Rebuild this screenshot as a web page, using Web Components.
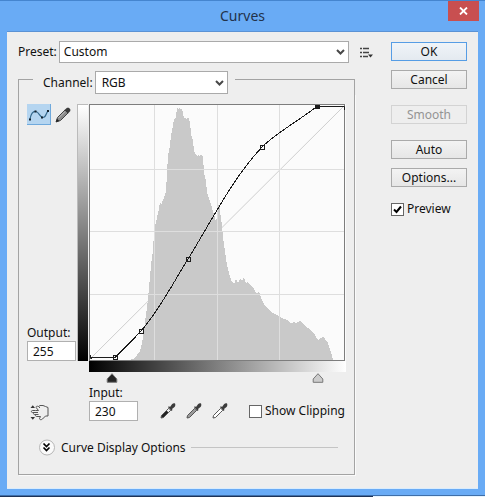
<!DOCTYPE html>
<html lang="en">
<head>
<meta charset="utf-8">
<meta name="viewport" content="width=device-width, initial-scale=1">
<title>Curves</title>
<style>
  body {
    margin: 0;
    min-height: 100vh;
    background: linear-gradient(to right, #1d3358 0 77%, #e6f4ff 77%);
    font: 12px/16px "Noto Sans", "Open Sans", sans-serif;
    color: #111;
  }
</style>
</head>
<body>

<!-- Window frame -->
<template id="window-template">
  <style>
    :host {
      display: block;
      box-sizing: border-box;
      background: #69abf5;
      border-top: 1px solid #4585cf;
      border-bottom: 1px solid #3f6ea8;
      padding: 0 7px 6px;
    }
    header {
      display: grid;
      grid-template-columns: 32px 1fr 32px;
      height: 30px;
    }
    h1 {
      margin: 0;
      font-size: 14px;
      font-weight: 400;
      line-height: 30px;
      text-align: center;
      color: #22324a;
    }
    button {
      width: 31px;
      height: 20px;
      padding: 0;
      border: 0;
      background: #c84f50;
      display: grid;
      place-items: center;
    }
    header button { margin-left: 2px; }
    main {
      background: #eee;
      border-top: 1px solid #5b92d4;
      border-bottom: 1px solid #d9ecfd;
      padding: 9px 11px 13px;
    }
  </style>
  <header>
    <span></span>
    <h1></h1>
    <button type="button" aria-label="Close">
      <svg width="9" height="8" viewBox="0 0 9 8"><path d="M1 .5 8 7.5M8 .5 1 7.5" stroke="#fff" stroke-width="1.8"/></svg>
    </button>
  </header>
  <main><slot></slot></main>
</template>

<!-- Two columns: settings and actions -->
<template id="dialog-template">
  <style>
    :host {
      display: grid;
      grid-template-columns: minmax(0, 1fr) 76px;
      gap: 18px;
    }
    .actions { display: grid; gap: 9px; align-content: start; padding-top: 1px; }
    .actions ::slotted(.space) { margin-top: 7px; }
    .actions ::slotted(.check) { margin-top: 5px; }
  </style>
  <div><slot></slot></div>
  <div class="actions"><slot name="actions"></slot></div>
</template>

<template id="select-template">
  <style>
    :host { display: flex; align-items: center; gap: 2px; }
    .box { display: grid; flex: 1; }
    select, svg { grid-area: 1 / 1; }
    select {
      appearance: none;
      width: 100%;
      height: 22px;
      padding: 0 20px 0 4px;
      border: 1px solid #aaa;
      border-radius: 0;
      background: #fff;
      font: inherit;
      color: inherit;
    }
    svg { place-self: center end; margin-right: 4px; pointer-events: none; }
    :host([large]) select { height: 23px; padding-left: 6px; }
  </style>
  <label for="list"></label>
  <span class="box">
    <select id="list"></select>
    <svg width="9" height="6" viewBox="0 0 9 6"><path d="M1 1 4.500 4.500 8 1" fill="none" stroke="#484848" stroke-width="2"/></svg>
  </span>
</template>

<template id="button-template">
  <style>
    :host { display: block; }
    button {
      display: block;
      width: 100%;
      height: 19px;
      padding: 0;
      border: 1px solid #aaa;
      background: linear-gradient(#f3f3f3, #e6e6e6);
      font: inherit;
      line-height: 16px;
      color: inherit;
    }
    :host([primary]) button { border-color: #569de5; background: linear-gradient(#f0f4f8, #e4eaf0); }
    button:disabled { border-color: #d3d3d3; background: #eee; color: #949494; }
  </style>
  <button type="button"><slot></slot></button>
</template>

<template id="checkbox-template">
  <style>
    :host { display: block; }
    label { display: flex; align-items: center; gap: 3px; white-space: nowrap; }
    .box { display: grid; }
    input, svg { grid-area: 1 / 1; }
    input {
      appearance: none;
      width: 13px;
      height: 13px;
      margin: 0;
      border: 1px solid #666;
      background: #fff;
    }
    svg { visibility: hidden; pointer-events: none; }
    input:checked + svg { visibility: visible; }
  </style>
  <label>
    <span class="box">
      <input type="checkbox">
      <svg width="13" height="13" viewBox="0 0 13 13"><path d="M3 6.500 5.500 9 10 3.500" fill="none" stroke="#000" stroke-width="2"/></svg>
    </span>
    <span><slot></slot></span>
  </label>
</template>

<template id="field-template">
  <style>
    :host { display: grid; width: 49px; }
    label { line-height: 16px; }
    input {
      box-sizing: border-box;
      width: 100%;
      height: 20px;
      padding: 0 5px;
      border: 1px solid #b0b0b0;
      background: #fff;
      font: inherit;
      color: inherit;
    }
  </style>
  <label for="value"></label>
  <input id="value" type="text" inputmode="numeric">
</template>

<template id="tool-template">
  <style>
    :host { display: block; }
    button {
      display: grid;
      place-items: center;
      padding: 0;
      border: 0;
      background: none;
    }
    :host([active]) button {
      width: 24px;
      height: 21px;
      background: #b5d5f0;
      border: solid #6fa9dc;
      border-width: 0 1px 1px 0;
    }
  </style>
  <button type="button"><slot></slot></button>
</template>

<!-- Frame whose top line is broken by the header control -->
<template id="group-template">
  <style>
    :host { display: block; }
    .top { display: flex; }
    .start, .end { margin-top: 8px; border-top: 1px solid #a3a3a3; }
    .start { width: 15px; margin-right: 10px; }
    .start::before { content: ""; display: block; height: 100%; border-left: 1px solid #a3a3a3; }
    .end { flex: 1; margin-left: 7px; border-right: 1px solid #a3a3a3; }
    .body {
      border: solid #a3a3a3;
      border-width: 0 1px 1px;
      padding: 10px 8px 18px;
      box-shadow: 1px 1px #fafafa;
    }
  </style>
  <div class="top">
    <span class="start"></span>
    <slot name="header"></slot>
    <span class="end"></span>
  </div>
  <div class="body"><slot></slot></div>
</template>

<template id="graph-template">
  <style>
    :host {
      display: grid;
      grid-template-columns: 50px 12px minmax(0, 1fr);
    }
    .side { display: flex; flex-direction: column; justify-content: space-between; }
    .output-ramp {
      box-sizing: border-box;
      background: linear-gradient(#fff, #000);
      border: solid #bbb;
      border-width: 1px 0 0 1px;
      margin-right: 1px;
    }
    svg { display: block; width: 100%; height: auto; }
    .input { grid-column: 3; }
    .input-ramp { height: 11px; background: linear-gradient(to right, #000, #fff); }
    .sliders { display: grid; margin: 0 -6px; padding-top: 1px; }
    input {
      grid-area: 1 / 1;
      appearance: none;
      width: 100%;
      height: 10px;
      margin: 0;
      background: none;
      pointer-events: none;
    }
    input::-webkit-slider-thumb {
      appearance: none;
      width: 12px;
      height: 10px;
      pointer-events: auto;
      background: url("data:image/svg+xml,%3Csvg xmlns='http://www.w3.org/2000/svg' width='12' height='10'%3E%3Cpath d='M6 .7 10.800 6v3.300H1.200V6z' fill='%23252525' stroke='%23777'/%3E%3C/svg%3E");
    }
    .white::-webkit-slider-thumb {
      background: url("data:image/svg+xml,%3Csvg xmlns='http://www.w3.org/2000/svg' width='12' height='10'%3E%3Cpath d='M6 .7 10.800 6v3.300H1.200V6z' fill='%23ccc' stroke='%23777'/%3E%3C/svg%3E");
    }
  </style>
  <div class="side">
    <slot name="tools"></slot>
    <slot name="output"></slot>
  </div>
  <div class="output-ramp"></div>
  <svg viewBox="0 0 257 257" role="img" aria-label="Tone curve">
    <rect width="257" height="257" fill="#fbfbfb"/>
    <path d="M2 254 255 2" stroke="#cfcfcf"/>
    <path id="histogram" fill="#c9c9c9" shape-rendering="crispEdges"/>
    <path d="M65.500 1V256M128.500 1V256M190.500 1V256M1 65.500H256M1 127.500H256M1 190.500H256" stroke="#dedede"/>
    <rect x=".5" y=".5" width="255" height="256" fill="none" stroke="#7d7d7d"/>
    <path id="curve" fill="none" stroke="#1c1c1c" shape-rendering="crispEdges"/>
    <path d="M1.500 251V254.500H3M253 2.500H255.500V6" fill="none" stroke="#1c1c1c"/>
    <g id="points" stroke="#1c1c1c"></g>
  </svg>
  <div class="input">
    <div class="input-ramp"></div>
    <div class="sliders">
      <input class="black" type="range" min="0" max="255" value="23" aria-label="Black point">
      <input class="white" type="range" min="0" max="255" value="227" aria-label="White point">
    </div>
  </div>
</template>

<template id="toolbar-template">
  <style>
    :host { display: flex; align-items: flex-end; padding-top: 2px; }
    .hand { width: 62px; box-sizing: border-box; padding-left: 3px; }
    .droppers { display: flex; gap: 10px; margin: 0 21px 2px 22px; }
    .check { padding-bottom: 2px; }
  </style>
  <div class="hand"><slot name="hand"></slot></div>
  <slot name="input"></slot>
  <div class="droppers"><slot name="droppers"></slot></div>
  <div class="check"><slot></slot></div>
</template>

<template id="expander-template">
  <style>
    :host { display: flex; align-items: center; padding: 18px 8px 0 12px; }
    :host::after { content: ""; flex: 1; border-top: 1px solid #c4c4c4; margin-left: 5px; }
    button {
      display: flex;
      align-items: center;
      gap: 6px;
      padding: 0;
      border: 0;
      background: none;
      font: inherit;
      color: inherit;
    }
  </style>
  <button type="button" aria-expanded="false">
    <svg width="16" height="17" viewBox="0 0 16 17">
      <circle cx="8" cy="8.500" r="7.500" fill="#fafafa" stroke="#b5b5b5"/>
      <path d="M4.500 4.500 7.500 7.500 10.500 4.500M4.500 8.500 7.500 11.500 10.500 8.500" fill="none" stroke="#000" stroke-width="1.700"/>
    </svg>
    <slot></slot>
  </button>
</template>

<template id="row-template">
  <style>
    :host { display: flex; align-items: center; }
    ::slotted(curves-select) { flex: 1; }
  </style>
  <slot></slot>
</template>

<script>
  const SVG_NS = 'http://www.w3.org/2000/svg';

  const ICONS = {
    menu: [13, 11, '<path d="M0 1.500H2M0 5.500H2M0 9.500H2M3 1.500H9M3 5.500H9M3 9.500H8" stroke="#444" stroke-width="1.500"/><path d="M8 7.500h5L10.500 10.500z" fill="#333"/>'],
    curve: [22, 15, '<path d="M2 12C3 7 5 4 8 4.500S12 10.500 15 10.500 18 6 20 4" fill="none" stroke="#35698c" stroke-width="1.200"/><path d="M1 11.500h2v2H1zM6.500 3.500h2v2h-2zM13 9.500h2v2h-2zM19 3h2v2h-2z" fill="#14222e"/>'],
    pencil: [16, 16, '<path d="M1 15 2.500 10.500 10 3 13 6 5.500 13.500z" fill="#8b8b8b" stroke="#444"/><path d="M1 15 2 11.800 4.300 14z" fill="#222"/><path d="M3.500 11 10 4.500" stroke="#c4c4c4"/><path d="M9.500 3 12 .8 13.800.8 15.300 2.300V4L13 6.500z" fill="#3b3b3b"/>'],
    hand: [19, 17, '<path d="M.5 4 2.800 1.200 5 4zM.5 13 2.800 15.800 5 13z" fill="#333"/><path d="M5.500 6.500H2.500C1 6.500 1 8.500 2.500 8.500H8M4 8.500C3 9.500 3.500 10.500 4.500 10.500H8.500M5.500 10.500C5 12 6 12.500 7 12.500H10.500L9.500 14.500C9.500 16 11.500 16 12.500 15L15.500 12H18V3.500L15.500 2.500 13 1.500H10L8.500 2.500C6.500 1.500 5.500 3 6.500 4L8.500 6.500H5.500M8.500 2.500 10 4" fill="none" stroke="#555"/>'],
    dropBlack: dropper('#222'),
    dropGray: dropper('#999'),
    dropWhite: dropper('#fff')
  };

  function dropper(color) {
    return [16, 16, `<path d="M1 15 1.500 12.500 8.500 5.500 10.500 7.500 3.500 14.500z" fill="${color}" stroke="#555"/>
      <path d="M8.500 5.500 6.500 7.500 8.500 9.500 10.500 7.500z" fill="${color === '#222' ? '#eee' : color}"/>
      <path d="M6.500 7.500 8.500 5.500M8.500 9.500 10.500 7.500" stroke="#555"/>
      <path d="M8 4 9 3.200 10 4 12 1.200C13 0 14.500 0 15 .5 15.500 1.500 15.500 3 14.500 4L12 6 12.500 7 11.500 8z" fill="#3c3c3c"/>`];
  }

  // Attaches a shadow root filled from the template with the given id
  class TemplateElement extends HTMLElement {
    constructor() {
      super();
      const template = document.getElementById(this.constructor.template);
      this.attachShadow({ mode: 'open' }).appendChild(template.content.cloneNode(true));
    }

    find(selector) {
      return this.shadowRoot.querySelector(selector);
    }
  }

  class CurvesWindow extends TemplateElement {
    static template = 'window-template';
    connectedCallback() {
      this.find('h1').textContent = this.getAttribute('heading');
    }
  }

  class CurvesSelect extends TemplateElement {
    static template = 'select-template';
    connectedCallback() {
      this.find('label').textContent = this.getAttribute('label');
      const options = this.getAttribute('options').split(',');
      this.find('select').replaceChildren(...options.map((text) => new Option(text)));
    }
  }

  class CurvesButton extends TemplateElement {
    static template = 'button-template';
    connectedCallback() {
      this.find('button').disabled = this.hasAttribute('disabled');
    }
  }

  class CurvesCheckbox extends TemplateElement {
    static template = 'checkbox-template';
    connectedCallback() {
      this.find('input').checked = this.hasAttribute('checked');
    }
  }

  class CurvesField extends TemplateElement {
    static template = 'field-template';
    connectedCallback() {
      this.find('label').textContent = this.getAttribute('label');
      this.find('input').value = this.getAttribute('value');
    }
  }

  class CurvesTool extends TemplateElement {
    static template = 'tool-template';
    connectedCallback() {
      this.find('button').setAttribute('aria-label', this.getAttribute('label'));
    }
  }

  class CurvesIcon extends HTMLElement {
    constructor() {
      super();
      this.attachShadow({ mode: 'open' });
    }

    connectedCallback() {
      const [width, height, shape] = ICONS[this.getAttribute('name')];
      this.shadowRoot.innerHTML = `
        <style>:host { display: block; } svg { display: block; }</style>
        <svg width="${width}" height="${height}" viewBox="0 0 ${width} ${height}">${shape}</svg>`;
    }
  }

  class CurvesGraph extends TemplateElement {
    static template = 'graph-template';

    // x, y pairs of the histogram outline
    histogram = [
      41, 256, 46, 254, 51, 247, 53, 239, 55, 226, 59, 195, 62, 161, 64, 146, 65, 128, 67, 118,
      70, 105, 71, 97, 72, 101, 74, 96, 77, 88, 78, 69, 79, 51, 81, 42, 82, 31, 84, 22, 85, 15,
      87, 13, 88, 3, 90, 6, 91, 2, 92, 7, 93, 3, 94, 11, 96, 15, 97, 13, 98, 16, 99, 12,
      101, 18, 102, 30, 104, 36, 105, 47, 107, 51, 109, 52, 110, 50, 111, 53, 112, 50, 114, 53,
      115, 69, 117, 77, 118, 88, 121, 97, 123, 104, 125, 110, 127, 118, 129, 105, 130, 97,
      131, 107, 133, 121, 134, 134, 136, 147, 138, 161, 141, 173, 143, 178, 145, 180, 147, 175,
      149, 179, 151, 175, 153, 177, 155, 173, 157, 179, 159, 178, 162, 182, 165, 185, 168, 190,
      170, 187, 172, 194, 175, 200, 178, 204, 181, 207, 186, 210, 190, 212, 195, 215, 198, 216,
      202, 219, 205, 218, 207, 219, 211, 217, 213, 219, 216, 222, 219, 224, 223, 228, 226, 231,
      229, 236, 232, 234, 234, 233, 236, 235, 239, 239, 241, 246, 243, 251, 244, 256
    ];

    points = [[26, 253], [52, 227], [99, 155], [173, 43], [228, 3]];

    connectedCallback() {
      const steps = [];
      for (let i = 0; i < this.histogram.length; i += 2) {
        steps.push(`${this.histogram[i]} ${this.histogram[i + 1]}`);
      }
      this.find('#histogram').setAttribute('d', `M${steps.join('L')}Z`);
      this.find('#curve').setAttribute('d',
        'M1 253.500H26C34 245 43 237 52 227C69 208 83 181 99 155C122 118 143 75 173 43C186 30 209 17 228 2.500H255');

      this.find('#points').replaceChildren(...this.points.map(([x, y], index) => {
        const rect = document.createElementNS(SVG_NS, 'rect');
        rect.setAttribute('x', x - 1.5);
        rect.setAttribute('y', y - 1.5);
        rect.setAttribute('width', 4);
        rect.setAttribute('height', index === 4 ? 3 : 4);
        rect.setAttribute('fill', index === this.points.length - 1 ? '#1c1c1c' : 'none');
        return rect;
      }));
    }
  }

  class CurvesDialog extends TemplateElement { static template = 'dialog-template'; }
  class CurvesGroup extends TemplateElement { static template = 'group-template'; }
  class CurvesToolbar extends TemplateElement { static template = 'toolbar-template'; }
  class CurvesExpander extends TemplateElement { static template = 'expander-template'; }
  class CurvesRow extends TemplateElement { static template = 'row-template'; }

  customElements.define('curves-window', CurvesWindow);
  customElements.define('curves-dialog', CurvesDialog);
  customElements.define('curves-select', CurvesSelect);
  customElements.define('curves-button', CurvesButton);
  customElements.define('curves-checkbox', CurvesCheckbox);
  customElements.define('curves-field', CurvesField);
  customElements.define('curves-tool', CurvesTool);
  customElements.define('curves-icon', CurvesIcon);
  customElements.define('curves-group', CurvesGroup);
  customElements.define('curves-graph', CurvesGraph);
  customElements.define('curves-toolbar', CurvesToolbar);
  customElements.define('curves-expander', CurvesExpander);
  customElements.define('curves-row', CurvesRow);
</script>

<style>
  .preset { gap: 11px; margin-bottom: 8px; }
  .settings { margin-right: 18px; }
  .channel { width: 185px; }
  .tools { gap: 4px; }
</style>

<curves-window heading="Curves">
  <curves-dialog>
    <curves-row class="preset">
      <curves-select label="Preset:" options="Custom,Default"></curves-select>
      <curves-tool label="Preset options"><curves-icon name="menu"></curves-icon></curves-tool>
    </curves-row>

    <curves-group class="settings">
      <curves-select class="channel" slot="header" large label="Channel:" options="RGB,Red,Green,Blue"></curves-select>

      <curves-graph>
        <curves-row class="tools" slot="tools">
          <curves-tool label="Edit points" active><curves-icon name="curve"></curves-icon></curves-tool>
          <curves-tool label="Draw curve"><curves-icon name="pencil"></curves-icon></curves-tool>
        </curves-row>
        <curves-field slot="output" label="Output:" value="255"></curves-field>
      </curves-graph>

      <curves-toolbar>
        <curves-tool slot="hand" label="Adjust on image"><curves-icon name="hand"></curves-icon></curves-tool>
        <curves-field slot="input" label="Input:" value="230"></curves-field>
        <curves-tool slot="droppers" label="Set black point"><curves-icon name="dropBlack"></curves-icon></curves-tool>
        <curves-tool slot="droppers" label="Set gray point"><curves-icon name="dropGray"></curves-icon></curves-tool>
        <curves-tool slot="droppers" label="Set white point"><curves-icon name="dropWhite"></curves-icon></curves-tool>
        <curves-checkbox>Show Clipping</curves-checkbox>
      </curves-toolbar>

      <curves-expander>Curve Display Options</curves-expander>
    </curves-group>

    <curves-button slot="actions" primary>OK</curves-button>
    <curves-button slot="actions">Cancel</curves-button>
    <curves-button slot="actions" class="space" disabled>Smooth</curves-button>
    <curves-button slot="actions" class="space">Auto</curves-button>
    <curves-button slot="actions">Options...</curves-button>
    <curves-checkbox slot="actions" class="check" checked>Preview</curves-checkbox>
  </curves-dialog>
</curves-window>

</body>
</html>
